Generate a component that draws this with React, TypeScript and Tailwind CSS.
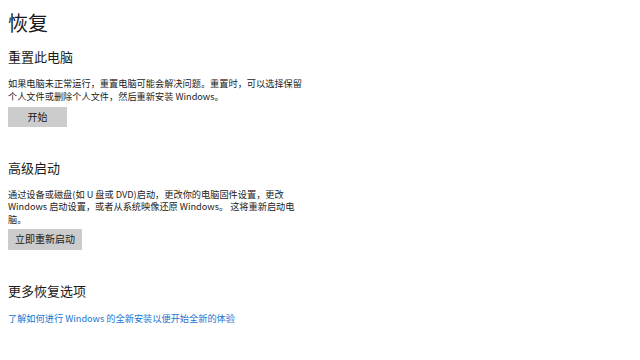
const font = { fontFamily: '"Noto Sans CJK SC", "Noto Sans", sans-serif' }

function GrayButton({ label, width, height }: { label: string; width: string; height: string }) {
    return (
        <button
            className={`${width} ${height} flex items-center justify-center bg-[#cccccc] text-[10px] leading-none text-[#1a1a1a]`}
        >
            {label}
        </button>
    )
}

export default function App() {
    return (
        <div className="h-[360px] w-[640px] overflow-hidden bg-white px-2 pt-[11px]" style={font}>
            <h1 className="text-[20px] leading-[24px] font-normal text-[#1a1a1a]">恢复</h1>

            <h2 className="mt-[13px] text-[13px] leading-[18px] font-normal text-[#1a1a1a]">重置此电脑</h2>
            <p className="mt-[11px] text-[9.2px] leading-[12.75px] text-[#222222]">
                如果电脑未正常运行，重置电脑可能会解决问题。重置时，可以选择保留
                <br />
                个人文件或删除个人文件，然后重新安装 Windows。
            </p>
            <div className="mt-[4px]">
                <GrayButton label="开始" width="w-[59px]" height="h-[20px]" />
            </div>

            <h2 className="mt-[32px] text-[13px] leading-[18px] font-normal text-[#1a1a1a]">高级启动</h2>
            <p className="mt-[11px] text-[9.2px] leading-[12.75px] text-[#222222]">
                通过设备或磁盘(如 U 盘或 DVD)启动，更改你的电脑固件设置，更改
                <br />
                Windows 启动设置，或者从系统映像还原 Windows。 这将重新启动电
                <br />
                脑。
            </p>
            <div className="mt-[3px]">
                <GrayButton label="立即重新启动" width="w-[74px]" height="h-[21px]" />
            </div>

            <h2 className="mt-[32px] text-[13px] leading-[18px] font-normal text-[#1a1a1a]">更多恢复选项</h2>
            <a href="#" className="mt-[12px] block text-[9.2px] leading-[13px] text-[#1a73d1]">
                了解如何进行 Windows 的全新安装以便开始全新的体验
            </a>
        </div>
    )
}
